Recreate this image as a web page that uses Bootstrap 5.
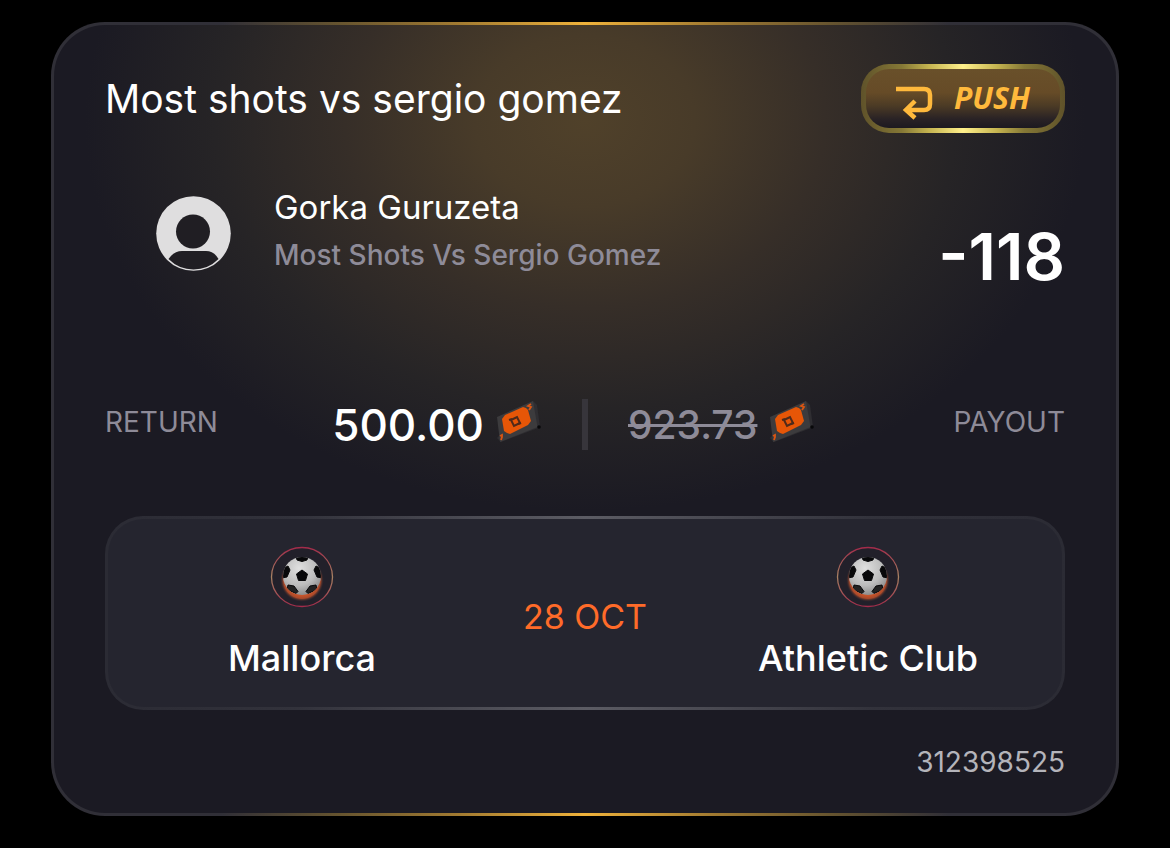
<!DOCTYPE html>
<html lang="en">
<head>
<meta charset="utf-8">
<meta name="viewport" content="width=device-width, initial-scale=1">
<title>Bet slip</title>
<link href="https://cdn.jsdelivr.net/npm/bootstrap@5.3.0/dist/css/bootstrap.min.css" rel="stylesheet">
<style>
  body { background: #000; color: #fff; font-family: Inter, "Liberation Sans", sans-serif; line-height: 1; }
  .slip-page { padding: 22px 51px 32px; }
  .slip {
    border: 3px solid transparent; border-radius: 54px; padding: 39px 51px 35px;
    background:
      radial-gradient(ellipse 500px 390px at 50% 96px, #50412a 0%, #483b29 22%, #362e28 48%, #262426 74%, rgba(28,27,35,0) 100%) padding-box,
      linear-gradient(#1b1a23, #1b1a23) padding-box,
      linear-gradient(90deg, #302f37 16%, #66542f 27%, #a17a31 38%, #efb23b 50%, #a17a31 62%, #66542f 73%, #302f37 84%) border-box;
  }
  .slip-title { font-size: 39px; font-weight: 400; line-height: 46px; }
  .push-btn {
    width: 204px; height: 69px; gap: 20px; border: 5px solid transparent; border-radius: 28px;
    color: #ffb93c; font: italic 700 30px/58px "Noto Sans", sans-serif; padding: 0;
    background:
      linear-gradient(#69502a 0%, #664b27 40%, #4c3b25 62%, #292225 85%, #1c1920 100%) padding-box,
      linear-gradient(90deg, #5f522a 0%, #857836 20%, #c3b24f 33%, #fff08b 50%, #c3b24f 67%, #857836 80%, #5f522a 100%) border-box;
  }
  .player { padding: 54px 0 0 51px; gap: 43px; }
  .avatar { margin-top: 9px; }
  .player-name { font-size: 33px; line-height: 40px; }
  .player-pick { font-size: 28px; line-height: 32px; margin-top: 12px; font-weight: 500; color: #8e8b98; }
  .odds { font-size: 65px; line-height: 64px; font-weight: 600; margin-top: 38px; }
  .amounts { margin-top: 110px; gap: 40px; color: #8e8b98; }
  .amount-side { flex: 1 1 0; }
  .amount-label { font-size: 28px; line-height: 32px; margin-top: -6px; }
  .amount { font-size: 44px; line-height: 48px; font-weight: 500; gap: 12px; }
  .amount-void { font-size: 39px; }
  .amount svg { margin-top: -6px; }
  .amount-rule { width: 6px; height: 51px; background: #37353b; }
  .fixture {
    margin-top: 66px; border: 3px solid transparent; border-radius: 38px; padding: 27px 49px 27px;
    background:
      linear-gradient(#25252f, #25252f) padding-box,
      linear-gradient(90deg, #2b2b34 0%, #32323b 20%, #5c5c64 50%, #32323b 80%, #2b2b34 100%) border-box;
  }
  .team { width: 290px; gap: 28px; font-size: 36px; line-height: 44px; font-weight: 500; }
  .match-date { font-size: 34px; line-height: 44px; color: #ff6b29; margin-top: 8px; }
  .slip-id { font-size: 28px; line-height: 32px; margin-top: 36px; color: #b4b4ba; }
</style>
</head>
<body>
<svg width="0" height="0" class="position-absolute" aria-hidden="true">
  <defs>
    <linearGradient id="ring" x2="0" y2="1"><stop stop-color="#a32b4a"/><stop offset=".5" stop-color="#a78363"/><stop offset="1" stop-color="#a32b4a"/></linearGradient>
    <radialGradient id="leather" cx=".42" cy=".3" r=".75"><stop stop-color="#e0e0e0"/><stop offset=".6" stop-color="#bcbcbc"/><stop offset="1" stop-color="#858585"/></radialGradient>
    <radialGradient id="ember"><stop offset=".65" stop-color="#d4582a"/><stop offset=".84" stop-color="#a8492a"/><stop offset="1" stop-color="#25252f" stop-opacity="0"/></radialGradient>
    <clipPath id="ballclip"><circle cx="32" cy="30" r="19"/></clipPath>
    <symbol id="ball" viewBox="0 0 64 62">
      <ellipse cx="32" cy="31" rx="30.5" ry="29.5" fill="#22202a" stroke="url(#ring)" stroke-width="1.3"/>
      <circle cx="32" cy="34" r="22" fill="url(#ember)"/>
      <circle cx="32" cy="30" r="19" fill="url(#leather)"/>
      <g clip-path="url(#ballclip)" fill="#08080a" stroke="#08080a" stroke-linejoin="round">
        <path d="M32 24l5.500 4-2 6.500h-7l-2-6.500z"/>
        <path d="M26 10h12l-1 4-5 1.500-5-1.500z"/>
        <path d="M12 23l6-3 2 4-3 7-5 1z"/><path d="M52 23l-6-3-2 4 3 7 5 1z"/>
        <path d="M18 39l6 1 4 5.500-2 2-9-4z" fill="#222"/><path d="M46 39l-6 1-4 5.500 2 2 9-4z" fill="#222"/>
      </g>
    </symbol>
    <symbol id="chip" viewBox="0 0 46 44">
      <path d="M37 1l4 4 3 22-2 1L5 42l-4-4z" fill="#2f2e32"/>
      <path d="M1 17L37 1l4.500 26L4 42z" fill="#3c3b3d"/>
      <path d="M6 19l3-4 18-8 3 1 2 2 3 11-3 4-18 9-3-1-3-2z" fill="#e65607"/>
      <path d="M15 20l6-3 3 6-6 3z" fill="none" stroke="#4f2a1a" stroke-width="2"/>
      <path d="M13 20l3-1M22 24l3-1" stroke="#4f2a1a" stroke-width="2"/>
      <path d="M35 4l-3 2 3 1-2 3M4 36l2-1v2l-1 3" fill="none" stroke="#d95512" stroke-width="1.800"/>
      <circle cx="43" cy="27" r="1.800" fill="#08080a"/>
    </symbol>
  </defs>
</svg>
<main class="slip-page">
  <article class="slip">
    <header class="d-flex justify-content-between align-items-center">
      <h1 class="slip-title mb-0">Most shots vs sergio gomez</h1>
      <button type="button" class="push-btn d-flex align-items-start justify-content-center">
        <svg class="mt-3" width="38" height="38" viewBox="0 0 38 38" fill="none" stroke="#ffb93c" stroke-width="4.500" aria-hidden="true"><path d="M0 4h28q6 0 6 6v9q0 6-6 6H11M19 16l-9 9 9 8"/></svg>
        PUSH
      </button>
    </header>
    <section class="player d-flex align-items-start">
      <svg class="avatar flex-shrink-0" width="75" height="75" viewBox="0 0 75 75" role="img" aria-label="Player">
        <circle cx="37.500" cy="37.500" r="37.300" fill="#dfdedf"/>
        <circle cx="37" cy="35.500" r="17" fill="#201e23"/>
        <path d="M12.500 63Q18 55 26 55h24q8 0 12.500 8Q52 73.500 37.500 73.500T12.500 63z" fill="#201e23"/>
      </svg>
      <div class="flex-grow-1">
        <div class="player-name">Gorka Guruzeta</div>
        <div class="player-pick">Most Shots Vs Sergio Gomez</div>
      </div>
      <div class="odds">-118</div>
    </section>
    <section class="amounts d-flex align-items-center">
      <div class="amount-side d-flex justify-content-between align-items-center">
        <div class="amount-label">RETURN</div>
        <div class="amount d-flex align-items-center text-white">500.00 <svg width="46" height="44" aria-hidden="true"><use href="#chip"/></svg></div>
      </div>
      <div class="amount-rule"></div>
      <div class="amount-side d-flex justify-content-between align-items-center">
        <div class="amount amount-void d-flex align-items-center"><s>923.73</s> <svg width="46" height="44" aria-hidden="true"><use href="#chip"/></svg></div>
        <div class="amount-label">PAYOUT</div>
      </div>
    </section>
    <section class="fixture d-flex justify-content-between align-items-center">
      <div class="team d-flex flex-column align-items-center"><svg width="64" height="62" aria-hidden="true"><use href="#ball"/></svg><span>Mallorca</span></div>
      <div class="match-date">28 OCT</div>
      <div class="team d-flex flex-column align-items-center"><svg width="64" height="62" aria-hidden="true"><use href="#ball"/></svg><span>Athletic Club</span></div>
    </section>
    <footer class="slip-id text-end">312398525</footer>
  </article>
</main>
<script src="https://cdn.jsdelivr.net/npm/bootstrap@5.3.0/dist/js/bootstrap.bundle.min.js"></script>
</body>
</html>
